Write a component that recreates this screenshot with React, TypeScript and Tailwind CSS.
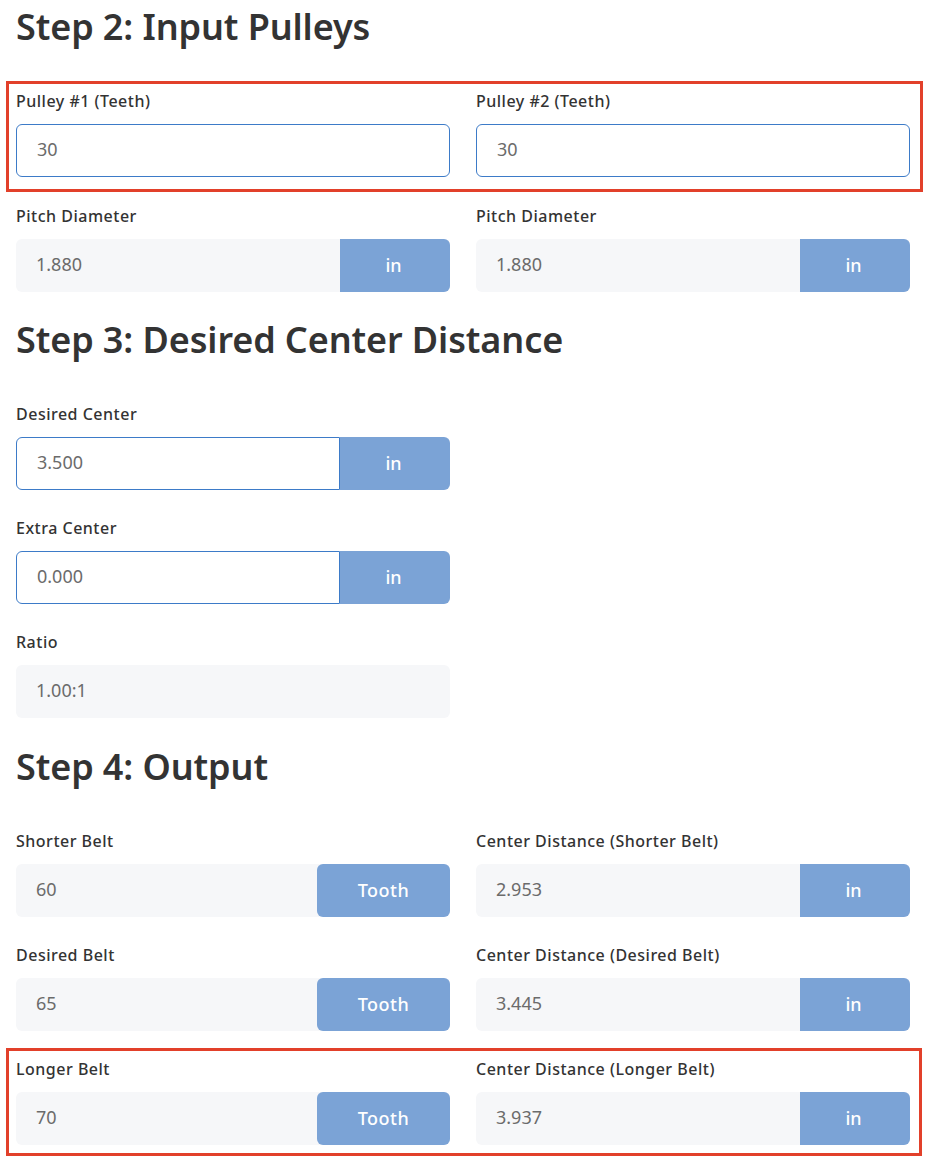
import React from "react";

const FONT = "font-['Noto_Sans',_'Open_Sans',_sans-serif]";

function Label({ children }: { children: React.ReactNode }) {
  return (
    <div className="text-[16px] leading-[24px] font-medium text-[#333] mb-[11px] tracking-[0.5px]">
      {children}
    </div>
  );
}

function EditInput({ value }: { value: string }) {
  return (
    <div className="h-[53px] border border-[#3d7bc8] rounded-[6px] bg-white flex items-center pl-[20px] pb-[3px] text-[18px] text-[#6b6b6b]">
      {value}
    </div>
  );
}

function EditUnit({ value, unit }: { value: string; unit: string }) {
  return (
    <div className="h-[53px] flex">
      <div className="flex-1 border border-[#3d7bc8] rounded-l-[6px] bg-white flex items-center pl-[20px] pb-[3px] text-[18px] text-[#6b6b6b]">
        {value}
      </div>
      <div className="w-[110px] bg-[#7ba3d6] rounded-r-[6px] flex items-center justify-center text-white text-[18px] font-medium pr-[3px]">
        {unit}
      </div>
    </div>
  );
}

function ReadUnit({ value, unit, wide }: { value: string; unit?: string; wide?: boolean }) {
  return (
    <div className="h-[53px] flex bg-[#f6f7f9] rounded-[6px]">
      <div className="flex-1 flex items-center pl-[20px] pb-[3px] text-[18px] text-[#6b6b6b]">{value}</div>
      {unit && (
        <div
          className={
            (wide ? "w-[133px] rounded-[6px] tracking-[0.5px]" : "w-[110px] rounded-r-[6px] pr-[3px]") +
            " bg-[#7ba3d6] flex items-center justify-center text-white text-[18px] font-medium"
          }
        >
          {unit}
        </div>
      )}
    </div>
  );
}

function Group({ label, children }: { label: string; children: React.ReactNode }) {
  return (
    <div>
      <Label>{label}</Label>
      {children}
    </div>
  );
}

function Heading({ children, first }: { children: React.ReactNode; first?: boolean }) {
  return (
    <h2
      className={
        (first ? "mt-[5px] " : "") +
        "text-[36px] leading-[44px] font-semibold text-[#333] mb-[40px] tracking-[-0.1px]"
      }
    >
      {children}
    </h2>
  );
}

function RedBox({ className }: { className: string }) {
  return <div className={"absolute border-[3px] border-[#e2402a] pointer-events-none " + className} />;
}

export default function App() {
  return (
    <div className={FONT + " bg-white min-h-[1162px] pl-[16px] pr-[18px] overflow-hidden"}>
      <Heading first>Step 2: Input Pulleys</Heading>

      <div className="relative grid grid-cols-2 gap-x-[26px]">
        <RedBox className="-left-[10px] -right-[13px] -top-[8px] -bottom-[15px]" />
        <Group label="Pulley #1 (Teeth)">
          <EditInput value="30" />
        </Group>
        <Group label="Pulley #2 (Teeth)">
          <EditInput value="30" />
        </Group>
      </div>
      <div className="h-[27px]" />
      <div className="grid grid-cols-2 gap-x-[26px] pb-[26px]">
        <Group label="Pitch Diameter">
          <ReadUnit value="1.880" unit="in" />
        </Group>
        <Group label="Pitch Diameter">
          <ReadUnit value="1.880" unit="in" />
        </Group>
      </div>

      <Heading>Step 3: Desired Center Distance</Heading>
      <div className="grid grid-cols-2 gap-x-[26px]">
        <div className="flex flex-col gap-y-[26px] pb-[27px]">
          <Group label="Desired Center">
            <EditUnit value="3.500" unit="in" />
          </Group>
          <Group label="Extra Center">
            <EditUnit value="0.000" unit="in" />
          </Group>
          <Group label="Ratio">
            <ReadUnit value="1.00:1" />
          </Group>
        </div>
        <div />
      </div>

      <Heading>Step 4: Output</Heading>
      <div className="grid grid-cols-2 gap-x-[26px] gap-y-[26px]">
        <Group label="Shorter Belt">
          <ReadUnit value="60" unit="Tooth" wide />
        </Group>
        <Group label="Center Distance (Shorter Belt)">
          <ReadUnit value="2.953" unit="in" />
        </Group>
        <Group label="Desired Belt">
          <ReadUnit value="65" unit="Tooth" wide />
        </Group>
        <Group label="Center Distance (Desired Belt)">
          <ReadUnit value="3.445" unit="in" />
        </Group>
      </div>
      <div className="h-[26px]" />
      <div className="relative grid grid-cols-2 gap-x-[26px]">
        <RedBox className="-left-[10px] -right-[12px] -top-[9px] -bottom-[11px]" />
        <Group label="Longer Belt">
          <ReadUnit value="70" unit="Tooth" wide />
        </Group>
        <Group label="Center Distance (Longer Belt)">
          <ReadUnit value="3.937" unit="in" />
        </Group>
      </div>
    </div>
  );
}
